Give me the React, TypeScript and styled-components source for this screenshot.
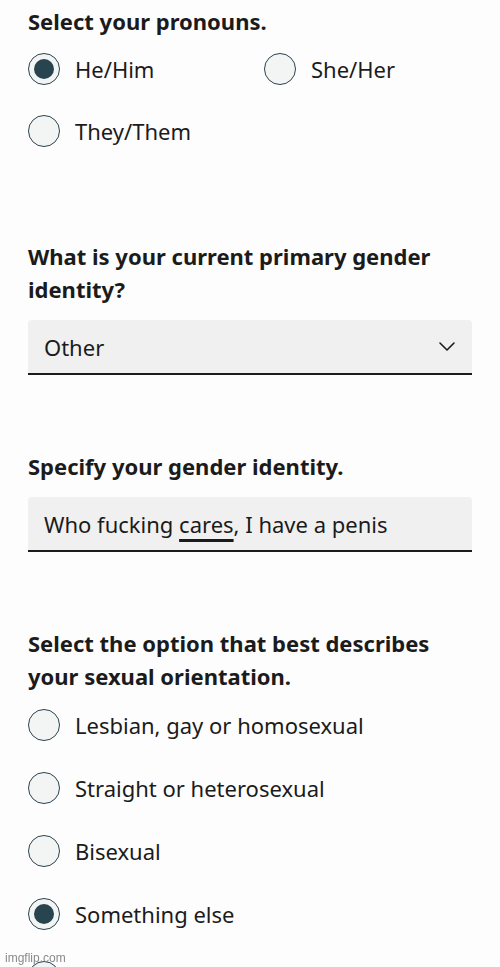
import React from 'react';
import styled, { createGlobalStyle } from 'styled-components';

const GlobalStyle = createGlobalStyle`
  html, body {
    margin: 0;
    padding: 0;
    background: #fdfdfd;
  }
  body {
    font-family: "Noto Sans", "Open Sans", sans-serif;
    color: #1b1b1b;
    overflow: hidden;
  }
`;

const Page = styled.div`
  display: flex;
  flex-direction: column;
  padding: 5px 28px 0 28px;
`;

const Section = styled.section<{ $top?: number }>`
  display: flex;
  flex-direction: column;
  margin-top: ${p => p.$top ?? 0}px;
`;

const Heading = styled.h2`
  margin: 0;
  font-size: 22px;
  font-weight: 700;
  line-height: 33px;
  color: #1b1b1b;
`;

const RadioGrid = styled.div<{ $cols: number }>`
  display: grid;
  grid-template-columns: ${p => (p.$cols === 2 ? '236px 1fr' : '1fr')};
`;

const RadioRow = styled.label<{ $h: number }>`
  display: flex;
  align-items: center;
  gap: 15px;
  height: ${p => p.$h}px;
  font-size: 22px;
  cursor: pointer;
`;

const Circle = styled.span<{ $checked?: boolean }>`
  box-sizing: border-box;
  width: 32px;
  height: 32px;
  flex: none;
  border-radius: 50%;
  border: 1.5px solid #2a4350;
  background: #f3f5f5;
  display: flex;
  align-items: center;
  justify-content: center;

  &::after {
    content: '';
    display: ${p => (p.$checked ? 'block' : 'none')};
    width: 20px;
    height: 20px;
    border-radius: 50%;
    background: #27444f;
  }
`;

const Field = styled.div`
  box-sizing: border-box;
  margin-top: 14px;
  height: 55px;
  display: flex;
  align-items: center;
  justify-content: space-between;
  padding: 0 16px 0 16px;
  background: #f0f0f0;
  border-radius: 4px 4px 0 0;
  border-bottom: 2px solid #1b1b1b;
  font-size: 22px;
`;

const Marked = styled.span`
  text-decoration: underline;
  text-decoration-thickness: 2.5px;
  text-underline-offset: 6px;
`;

const Watermark = styled.div`
  position: fixed;
  left: 5px;
  bottom: 2px;
  font-family: "Liberation Sans", Arial, sans-serif;
  font-size: 12px;
  color: #8a8a8a;
`;

const Chevron = () => (
  <svg width="18" height="12" viewBox="0 0 18 12" fill="none">
    <polyline points="2,2 9,9 16,2" stroke="#1b1b1b" strokeWidth="1.6" strokeLinecap="round" strokeLinejoin="round" />
  </svg>
);

interface RadioProps {
  label?: string;
  checked?: boolean;
  h: number;
}

const Radio = ({ label, checked, h }: RadioProps) => (
  <RadioRow $h={h}>
    <Circle $checked={checked} />
    {label && <span>{label}</span>}
  </RadioRow>
);

const orientations = [
  { key: 'gay', label: 'Lesbian, gay or homosexual' },
  { key: 'straight', label: 'Straight or heterosexual' },
  { key: 'bi', label: 'Bisexual' },
  { key: 'else', label: 'Something else', checked: true },
  { key: 'more' },
];

export default function App() {
  return (
    <>
      <GlobalStyle />
      <Page>
        <Section>
          <Heading>Select your pronouns.</Heading>
          <RadioGrid $cols={2}>
            <Radio label="He/Him" checked h={62} />
            <Radio label="She/Her" h={62} />
            <Radio label="They/Them" h={62} />
          </RadioGrid>
        </Section>

        <Section $top={78}>
          <Heading>What is your current primary gender identity?</Heading>
          <Field>
            <span>Other</span>
            <Chevron />
          </Field>
        </Section>

        <Section $top={75}>
          <Heading>Specify your gender identity.</Heading>
          <Field>
            <span>
              Who fucking <Marked>cares</Marked>, I have a penis
            </span>
          </Field>
        </Section>

        <Section $top={75}>
          <Heading>Select the option that best describes your sexual orientation.</Heading>
          <RadioGrid $cols={1}>
            {orientations.map(o => (
              <Radio key={o.key} label={o.label} checked={o.checked} h={63} />
            ))}
          </RadioGrid>
        </Section>
      </Page>
      <Watermark>imgflip.com</Watermark>
    </>
  );
}
